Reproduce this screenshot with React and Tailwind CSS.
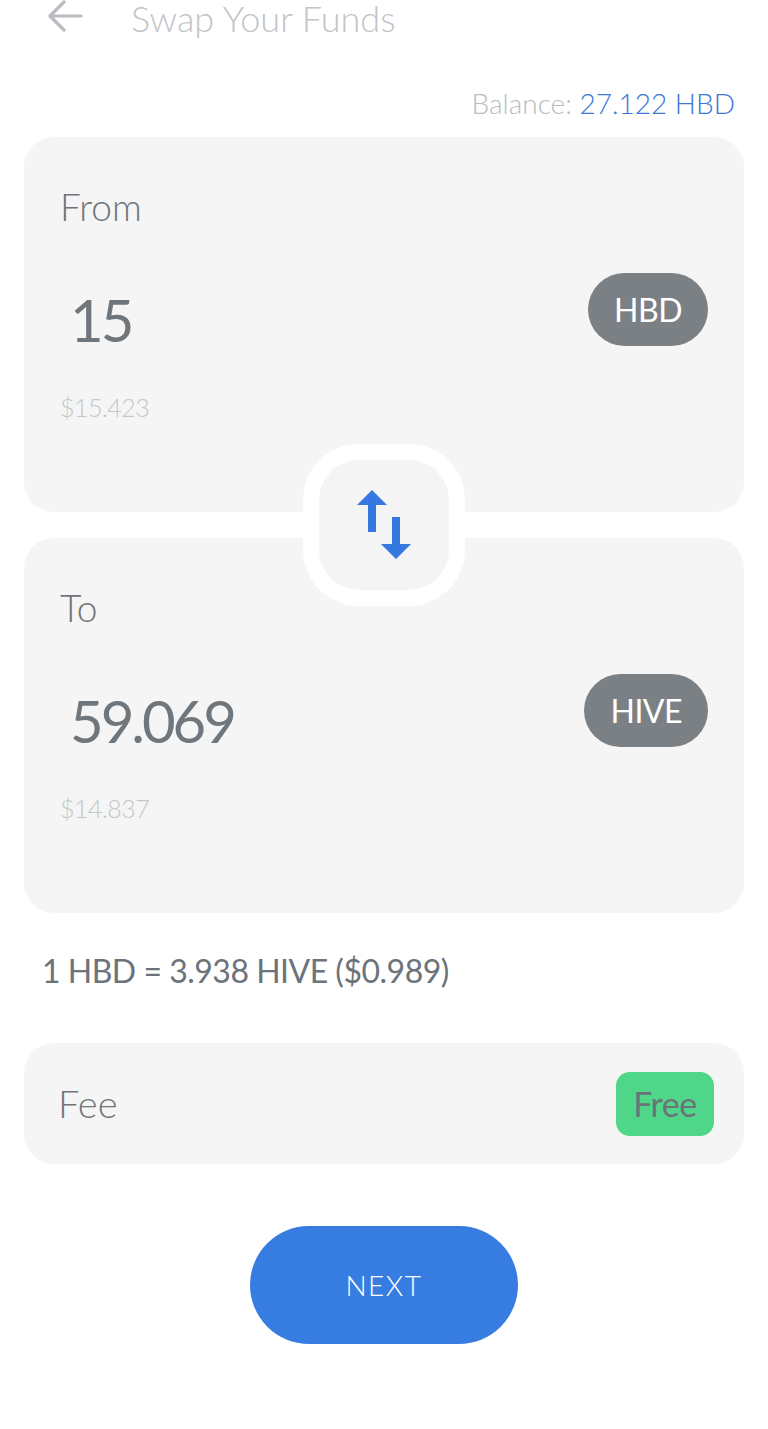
import React from 'react';

const font = { fontFamily: 'Lato, "Open Sans", "Liberation Sans", sans-serif' };

function BackArrow() {
  return (
    <svg width="36" height="34" viewBox="0 0 36 34" fill="none">
      <path d="M34 17H4M17 3L3 17l14 14" stroke="#b9bdc1" strokeWidth="3.2" strokeLinecap="round" strokeLinejoin="round" />
    </svg>
  );
}

function SwapIcon() {
  return (
    <svg width="130" height="130" viewBox="0 0 130 130">
      <path d="M53 30L68 45H57V72H49V45H38Z" fill="#3579e0" />
      <path d="M73 57H81V84H92L77 99L62 84H73Z" fill="#3579e0" />
    </svg>
  );
}

function TokenCard({ label, amount, token, usd }) {
  return (
    <div className="h-[375px] rounded-[30px] bg-[#f5f5f5] pl-9 pr-9 pt-[50px] flex flex-col">
      <div className="text-[37px] leading-[40px] font-light text-[#6e7479]">{label}</div>
      <div className="mt-[46px] h-[73px] flex items-center justify-between">
        <div className="ml-[10px] mt-[20px] text-[58px] leading-[60px] tracking-[-3px] text-[#6f767c]">{amount}</div>
        <div className="h-[73px] px-[26px] rounded-full bg-[#7b8085] flex items-center text-white text-[32px] tracking-[-0.5px]">
          {token}
        </div>
      </div>
      <div className="mt-[46px] text-[25px] leading-[30px] font-light tracking-[-0.5px] text-[#c4c7ca]">{usd}</div>
    </div>
  );
}

export default function App() {
  return (
    <div className="min-h-[1429px] bg-white px-6" style={font}>
      {/* header */}
      <div className="h-9 flex items-center">
        <div className="ml-[23px] -mt-[4px]"><BackArrow /></div>
        <div className="ml-[48px] text-[36px] font-light text-[#c1c5c9] leading-[36px]">Swap Your Funds</div>
      </div>

      {/* balance */}
      <div className="mt-[52px] pr-[9px] text-right text-[28px] leading-[31px] font-light">
        <span className="text-[#b8bcc0]">Balance: </span>
        <span className="text-[#3b78d8]">27.122 HBD</span>
      </div>

      {/* cards */}
      <div className="relative mt-[18px] flex flex-col gap-[26px]">
        <TokenCard label="From" amount="15" token="HBD" usd="$15.423" />
        <TokenCard label="To" amount="59.069" token="HIVE" usd="$14.837" />
        <div className="absolute left-1/2 top-[307px] -translate-x-1/2 w-[162px] h-[162px] rounded-[56px] bg-white flex items-center justify-center">
          <div className="w-[130px] h-[130px] rounded-[40px] bg-[#f4f4f4]">
            <SwapIcon />
          </div>
        </div>
      </div>

      {/* rate */}
      <div className="mt-[39px] ml-[18px] text-[32px] leading-[38px] tracking-[-0.5px] text-[#6c737a]">
        1 HBD = 3.938 HIVE ($0.989)
      </div>

      {/* fee */}
      <div className="mt-[53px] h-[121px] rounded-[30px] bg-[#f5f5f5] pl-[34px] pr-[30px] flex items-center justify-between">
        <div className="text-[38px] font-light text-[#6e757b]">Fee</div>
        <div className="w-[98px] h-[64px] rounded-[14px] bg-[#4fd688] flex items-center justify-center text-[34px] text-[#6b7378] tracking-[-0.5px]">
          Free
        </div>
      </div>

      {/* next */}
      <div className="mt-[62px] flex justify-center">
        <button className="w-[268px] h-[118px] rounded-full bg-[#377de1] text-white text-[28px] font-light tracking-[1.5px]">
          NEXT
        </button>
      </div>
    </div>
  );
}
